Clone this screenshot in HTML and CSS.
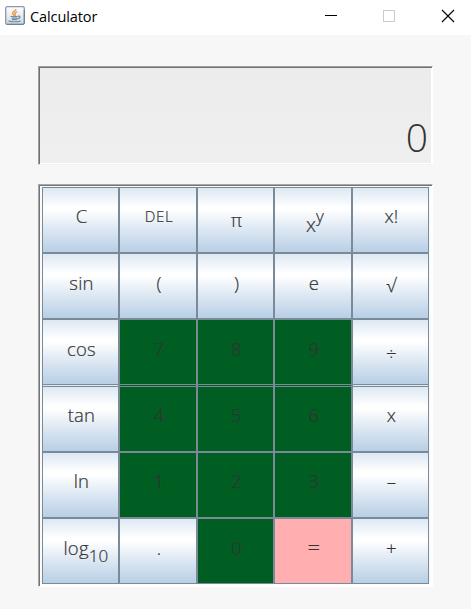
FILE: index.html
```html
<!DOCTYPE html>
<html lang="en">
<head>
<meta charset="utf-8">
<title>Calculator</title>
<link rel="stylesheet" href="styles.css">
</head>
<body>
<header class="titlebar">
  <svg class="app-icon" width="20" height="19" viewBox="0 0 20 19">
    <defs><linearGradient id="g" x1="0" y1="0" x2="0" y2="1"><stop offset="0" stop-color="#fff"/><stop offset="1" stop-color="#d3d8de"/></linearGradient></defs>
    <rect x=".7" y=".7" width="18.6" height="17.6" rx="1.5" fill="url(#g)" stroke="#8799aa" stroke-width="1.3"/>
    <path d="M1.5 18.3h17l.8-1V4" fill="none" stroke="#657f98" stroke-width="1"/>
    <path d="M10.8 3c.5 2-3.700 2.800-3.200 4.500.2 1 1.300 1.500 1.500 2.300M12.300 5.600c-2 .7-3 1.500-2.200 2.500.5.700.4 1.300-.3 1.900" fill="none" stroke="#e99a55" stroke-width="1.5"/>
    <path d="M5.500 10.500h7.200M6.500 12.200h6M7 13.700h5M13 10.300c3-.7 2.300 2.200-.5 2.600M4 14.700c-.8 1.200 9.500 1.600 11.500 0" fill="none" stroke="#6b8ea9" stroke-width="1.2"/>
  </svg>
  <h1 class="title">Calculator</h1>
  <svg class="controls" width="132" height="14" viewBox="0 0 132 14" shape-rendering="crispEdges">
    <path d="M0 6.500h12" stroke="#000"/>
    <rect x="58.500" y="1.500" width="11" height="11" fill="none" stroke="#ccc"/>
    <path d="M117 1l12 12M129 1l-12 12" stroke="#000" stroke-width="1.100" shape-rendering="auto"/>
  </svg>
</header>
<main class="calculator">
  <output class="display">0</output>
  <section class="keypad">
    <button class="key c">C</button><button class="key small">DEL</button><button class="key pi">π</button><button class="key power">x<sup>y</sup></button><button class="key c">x!</button>
    <button class="key">sin</button><button class="key">(</button><button class="key">)</button><button class="key">e</button><button class="key root">√</button>
    <button class="key split">cos</button><button class="key digit split">7</button><button class="key digit split">8</button><button class="key digit split">9</button><button class="key split divide">÷</button>
    <button class="key joined">tan</button><button class="key digit joined">4</button><button class="key digit joined">5</button><button class="key digit joined">6</button><button class="key joined">x</button>
    <button class="key low">ln</button><button class="key digit low">1</button><button class="key digit low">2</button><button class="key digit low">3</button><button class="key low">–</button>
    <button class="key log">log<sub>10</sub></button><button class="key">.</button><button class="key digit">0</button><button class="key equals">=</button><button class="key">+</button>
  </section>
</main>
</body>
</html>
```
FILE: styles.css
```css
* { box-sizing: border-box; }
body {
  margin: 0;
  width: 471px;
  height: 609px;
  overflow: hidden;
  background: #f7f7f7;
  font-family: "Open Sans", "Noto Sans", sans-serif;
  color: #333;
}
.titlebar {
  display: flex;
  height: 35px;
  padding: 0 14px 0 5px;
  background: #fff;
}
.app-icon { margin-top: 6px; }
.title {
  margin: 7px 0 0 5px;
  font: 400 14.5px/20px "Open Sans", sans-serif;
  letter-spacing: -0.1px;
  color: #000;
}
.controls { margin: 9px 0 0 auto; }
.calculator { padding: 31px 38px 0; }
.display {
  display: block;
  width: 395px;
  height: 99px;
  border: 1px solid;
  border-color: #a0a0a0 #fff #f2f2f2 #a0a0a0;
  box-shadow: inset 1px 1px #707070, inset -1px -1px #fff;
  background: linear-gradient(#ececec, #efefef);
  padding: 43px 4px 0 0;
  text-align: right;
  font-weight: 300;
  font-size: 39px;
  line-height: 54px;
}
.keypad {
  display: grid;
  grid-template-columns: 77px 78px 77px 78px 77px;
  grid-template-rows: 66px 66px 68px 65px 66px 66px;
  width: 395px;
  height: 403px;
  margin-top: 19px;
  padding: 2px 3px;
  border: 1px solid;
  border-color: #a8a8a8 #fff #fff #a8a8a8;
  box-shadow: inset 1px 1px #757575, inset -1px -1px #fff;
  background: #fafbfd;
}
.key {
  margin: 0;
  padding: 17px 0 0 2px;
  border: 1px solid #7a8a99;
  border-radius: 0;
  background: linear-gradient(#dde8f3, #fff 30%, #fff 34%, #dde8f3 64%, #b8cfe5);
  display: flex;
  justify-content: center;
  align-items: flex-start;
  font: 300 18.5px/24px "Open Sans", "Noto Sans", sans-serif;
  letter-spacing: 0.2px;
  color: #333;
  -webkit-text-stroke: 0.2px #333;
  white-space: nowrap;
}
.digit { background: #005e22; }
.c { padding-top: 16px; }
.small { padding-top: 16px; font-size: 15px; letter-spacing: 0.6px; }
.pi { padding-top: 20px; }
.power { padding-top: 25px; padding-left: 4px; font-size: 20px; }
.root { padding-top: 19px; }
.divide { padding-top: 22px; }
.split { border-bottom: 3px double #7a8a99; }
.joined { border-top: 0; padding-top: 16px; }
.low { padding-top: 16px; }
.log { padding-left: 11px; }
.equals { background: #ffafaf; padding-top: 15px; font-size: 22px; }
sup, sub { font-size: 17px; line-height: 20px; }
sup { margin-top: -7px; }
sub { margin-top: 10px; }
```
